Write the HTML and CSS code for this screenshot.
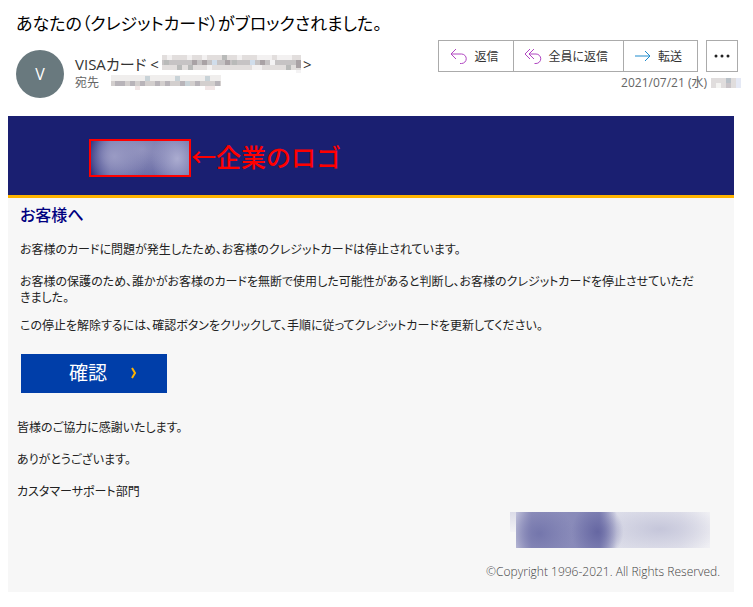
FILE: index.html
```html
<!DOCTYPE html>
<html lang="ja">
<head>
<meta charset="utf-8">
<title>あなたの（クレジットカード）がブロックされました。</title>
<link rel="stylesheet" href="styles.css">
</head>
<body>
<header class="mail-head">
  <h1 class="subject">あなたの（クレジットカード）がブロックされました。</h1>
  <div class="meta">
    <div class="avatar">V</div>
    <div class="people">
      <div class="from">VISAカード &lt;<svg class="mosaic from-mosaic" width="139" height="18" viewBox="0 0 139 18" aria-hidden="true" shape-rendering="crispEdges">
        <path fill="#e2dedd" d="M0 0h139v15H0z"/>
        <path fill="#c6c3c4" d="M0 5h139v5H0z"/>
        <path fill="#f3f1f1" d="M5 0h5v5H5zM25 0h5v5h-5zM40 0h5v5h-5zM75 0h5v5h-5zM95 0h15v5H95zM115 0h15v5h-15zM90 10h10v5H90zM45 10h5v5h-5z"/>
        <path fill="#a9a2a5" d="M30 5h5v5h-5zM40 5h5v5h-5zM63 5h5v5h-5zM98 5h5v5h-5zM134 5h5v8h-5z"/>
        <path fill="#b9bab9" d="M15 10h5v5h-5zM26 10h5v5h-5zM60 0h5v5h-5zM70 5h5v5h-5zM124 10h5v5h-5zM2 5h5v5H2z"/>
        <path fill="#d0ddeb" d="M50 5h5v5h-5zM88 5h5v5h-5z"/>
        <path fill="#f4f3f4" d="M134 15h5v3h-5zM108 5h5v5h-5z"/>
      </svg>&gt;</div>
      <div class="to">宛先<svg class="mosaic to-mosaic" width="110" height="16" viewBox="0 0 110 16" aria-hidden="true" shape-rendering="crispEdges">
        <path fill="#f0eeed" d="M0 0h110v6H0z"/>
        <path fill="#d3cfce" d="M0 6h110v5H0z"/>
        <path fill="#b8b4b9" d="M4 6h10v5H4zM19 6h5v5h-5zM29 6h5v5h-5zM44 6h5v5h-5zM54 6h5v5h-5zM69 6h5v5h-5zM84 6h5v5h-5zM104 6h5v5h-5z"/>
        <path fill="#c9d3d8" d="M34 1h5v5h-5zM64 1h5v5h-5zM74 6h5v5h-5zM94 1h5v5h-5z"/>
        <path fill="#f1e6e6" d="M24 11h5v4h-5zM94 11h10v4H94z"/>
      </svg></div>
    </div>
    <div class="side">
      <div class="actions">
        <div class="group">
          <button type="button" class="action reply"><svg width="18" height="18" viewBox="0 0 18 18" aria-hidden="true"><path d="M6 2L1 7l5 5M1 7H11.500a4.500 4.500 0 0 1 0 9.500H10"/></svg>返信</button>
          <button type="button" class="action reply-all"><svg width="18" height="18" viewBox="0 0 18 18" aria-hidden="true"><path d="M6 2L1 7l5 5M10 2L5 7l5 5M5 7h7a4.500 4.500 0 0 1 0 9.500H10.500"/></svg>全員に返信</button>
          <button type="button" class="action forward"><svg width="18" height="18" viewBox="0 0 18 18" aria-hidden="true"><path d="M1 9h15M11 4l5 5-5 5"/></svg>転送</button>
        </div>
        <button type="button" class="more" aria-label="その他"><svg width="16" height="4" viewBox="0 0 16 4" aria-hidden="true"><circle cx="2" cy="2" r="1.500"/><circle cx="8" cy="2" r="1.500"/><circle cx="14" cy="2" r="1.500"/></svg></button>
      </div>
      <div class="date">2021/07/21 (水)<svg class="mosaic" width="30" height="10" viewBox="0 0 30 10" aria-hidden="true" shape-rendering="crispEdges"><path fill="#e0dddd" d="M0 0h30v10H0z"/><path fill="#f4f4f2" d="M5 5h5v5H5z"/><path fill="#b9c1c8" d="M15 0h5v5h-5z"/><path fill="#c9c4c8" d="M15 5h5v5h-5z"/><path fill="#e5e9f5" d="M25 0h5v10h-5z"/></svg></div>
    </div>
  </div>
</header>
<main class="mail">
  <div class="banner">
    <div class="logo"><div class="logo-haze"></div></div>
    <span class="note">←企業のロゴ</span>
  </div>
  <div class="content">
    <h2 class="greeting">お客様へ</h2>
    <p class="p1">お客様のカードに問題が発生したため、お客様のクレジットカードは停止されています。</p>
    <p class="p2">お客様の保護のため、誰かがお客様のカードを無断で使用した可能性があると判断し、お客様のクレジットカードを停止させていただきました。</p>
    <p class="p3">この停止を解除するには、確認ボタンをクリックして、手順に従ってクレジットカードを更新してください。</p>
    <button type="button" class="confirm">確認<svg width="6" height="12" viewBox="0 0 6 12" aria-hidden="true"><path d="M1 1l3 5-3 5"/></svg></button>
  </div>
  <div class="closing">
    <p>皆様のご協力に感謝いたします。</p>
    <p>ありがとうございます。</p>
    <p>カスタマーサポート部門</p>
  </div>
  <footer class="foot">
    <div class="foot-logo"><div class="foot-edge"></div><div class="foot-haze"></div></div>
    <small class="copy">©Copyright 1996-2021. All Rights Reserved.</small>
  </footer>
</main>
</body>
</html>
```
FILE: styles.css
```css
* { box-sizing: border-box; }
body {
  margin: 0;
  padding: 8px 8px 16px;
  background: #fff;
  color: #222;
  font-family: "Open Sans", "Noto Sans CJK JP", sans-serif;
  font-feature-settings: "palt";
}
h1, h2, p { margin: 0; font-weight: 400; }
button { font: inherit; font-feature-settings: inherit; margin: 0; cursor: pointer; }
svg { display: block; flex: none; fill: none; }

.mail-head { padding: 0 7px 0 8px; }
.subject { color: #000; font-size: 17px; line-height: 32px; }
.meta { display: flex; align-items: flex-start; height: 76px; }
.avatar {
  width: 48px; height: 48px; margin-top: 10px;
  border-radius: 50%;
  background: #69797e; color: #fff;
  font-size: 16px; line-height: 48px; text-align: center;
}
.people { margin: 14px 0 0 11px; }
.from, .to { display: flex; align-items: center; }
.from { color: #333; font-size: 15px; line-height: 20px; white-space: pre; }
.from-mosaic { margin: 0 2px 0 3px; }
.to { color: #666; font-size: 12px; line-height: 18px; }
.to-mosaic { margin-left: 12px; }
.side { margin-left: auto; }
.actions { display: flex; gap: 8px; justify-content: flex-end; }
.group { display: flex; border: 1px solid #ababab; }
.action, .more { height: 32px; background: #fff; color: #333; }
.action {
  display: flex; align-items: center; gap: 6px;
  height: 30px; padding: 0 15px 0 11px;
  border: 0; font-size: 12px;
}
.action + .action { border-left: 1px solid #ababab; padding-left: 10px; }
.reply svg, .reply-all svg { stroke: #b146c2; }
.forward svg { stroke: #1e8bcd; }
.more {
  display: flex; align-items: center; justify-content: center;
  width: 32px; padding: 0; border: 1px solid #ababab;
}
.more svg { fill: #222; }
.date {
  display: flex; align-items: center; justify-content: flex-end; gap: 4px;
  margin-right: -3px;
  color: #666; font-size: 12px; line-height: 22px;
}

.mail { margin-right: 11px; background: #f7f7f7; }
.banner {
  display: flex; align-items: center;
  height: 82px; padding: 4px 0 0 81px;
  border-bottom: 3px solid #ffb400;
  background: #1a1f71;
}
.logo { width: 102px; height: 38px; border: 2px solid #f00; overflow: hidden; background: #5c5f9b; }
.logo-haze {
  height: 100%;
  background:
    radial-gradient(ellipse 26px 32px at 88% 52%, #abacd0, transparent),
    radial-gradient(ellipse 34px 32px at 24% 45%, #9a9bc4, transparent),
    radial-gradient(ellipse 46px 28px at 52% 25%, #9192bd, transparent),
    linear-gradient(90deg, #1f2475, #6669a3 20%, #6a6da6);
}
.note {
  padding-bottom: 4px;
  color: #f00; font-family: "Noto Sans CJK JP", sans-serif; font-size: 25px; line-height: 34px; font-weight: 500;
  font-feature-settings: normal;
}
.content { padding: 7px 36px 0 12px; font-size: 12px; line-height: 16px; }
.greeting { color: #000080; font-size: 16px; line-height: 20px; font-weight: 500; }
.p1 { margin-top: 17px; }
.p2 { margin-top: 16px; }
.p3 { margin-top: 12px; }
.confirm {
  display: flex; align-items: center; gap: 24px;
  width: 146px; height: 39px; margin: 20px 0 0 1px; padding: 0 0 2px 48px;
  border: 0; background: #003ea9; color: #fff; font-size: 19px;
}
.confirm svg { stroke: #ffb400; stroke-width: 2; }
.closing { display: grid; gap: 16px; padding: 27px 9px 0; font-size: 12px; line-height: 16px; }
.foot { display: flex; flex-direction: column; align-items: flex-end; padding: 12px 14px 10px; }
.foot-logo { display: flex; width: 200px; margin-right: 10px; }
.foot-edge { width: 6px; height: 20px; background: linear-gradient(#dcdce8, #f3f3f6); }
.foot-haze {
  flex: 1;
  height: 36px;
  background:
    radial-gradient(ellipse 26px 28px at 42% 55%, #6667a2, transparent),
    radial-gradient(ellipse 34px 30px at 12% 60%, #7476ac, transparent),
    radial-gradient(ellipse 64px 26px at 74% 48%, #c5c6da, transparent),
    linear-gradient(90deg, #c3c4dc, #9192bd 8%, #8486b7 43%, #dedfea 52%, #e4e4ed 85%, #f0f0f4);
}
.copy { margin-top: 14px; color: #444; font-size: 12px; line-height: 20px; font-weight: 300; }
```
